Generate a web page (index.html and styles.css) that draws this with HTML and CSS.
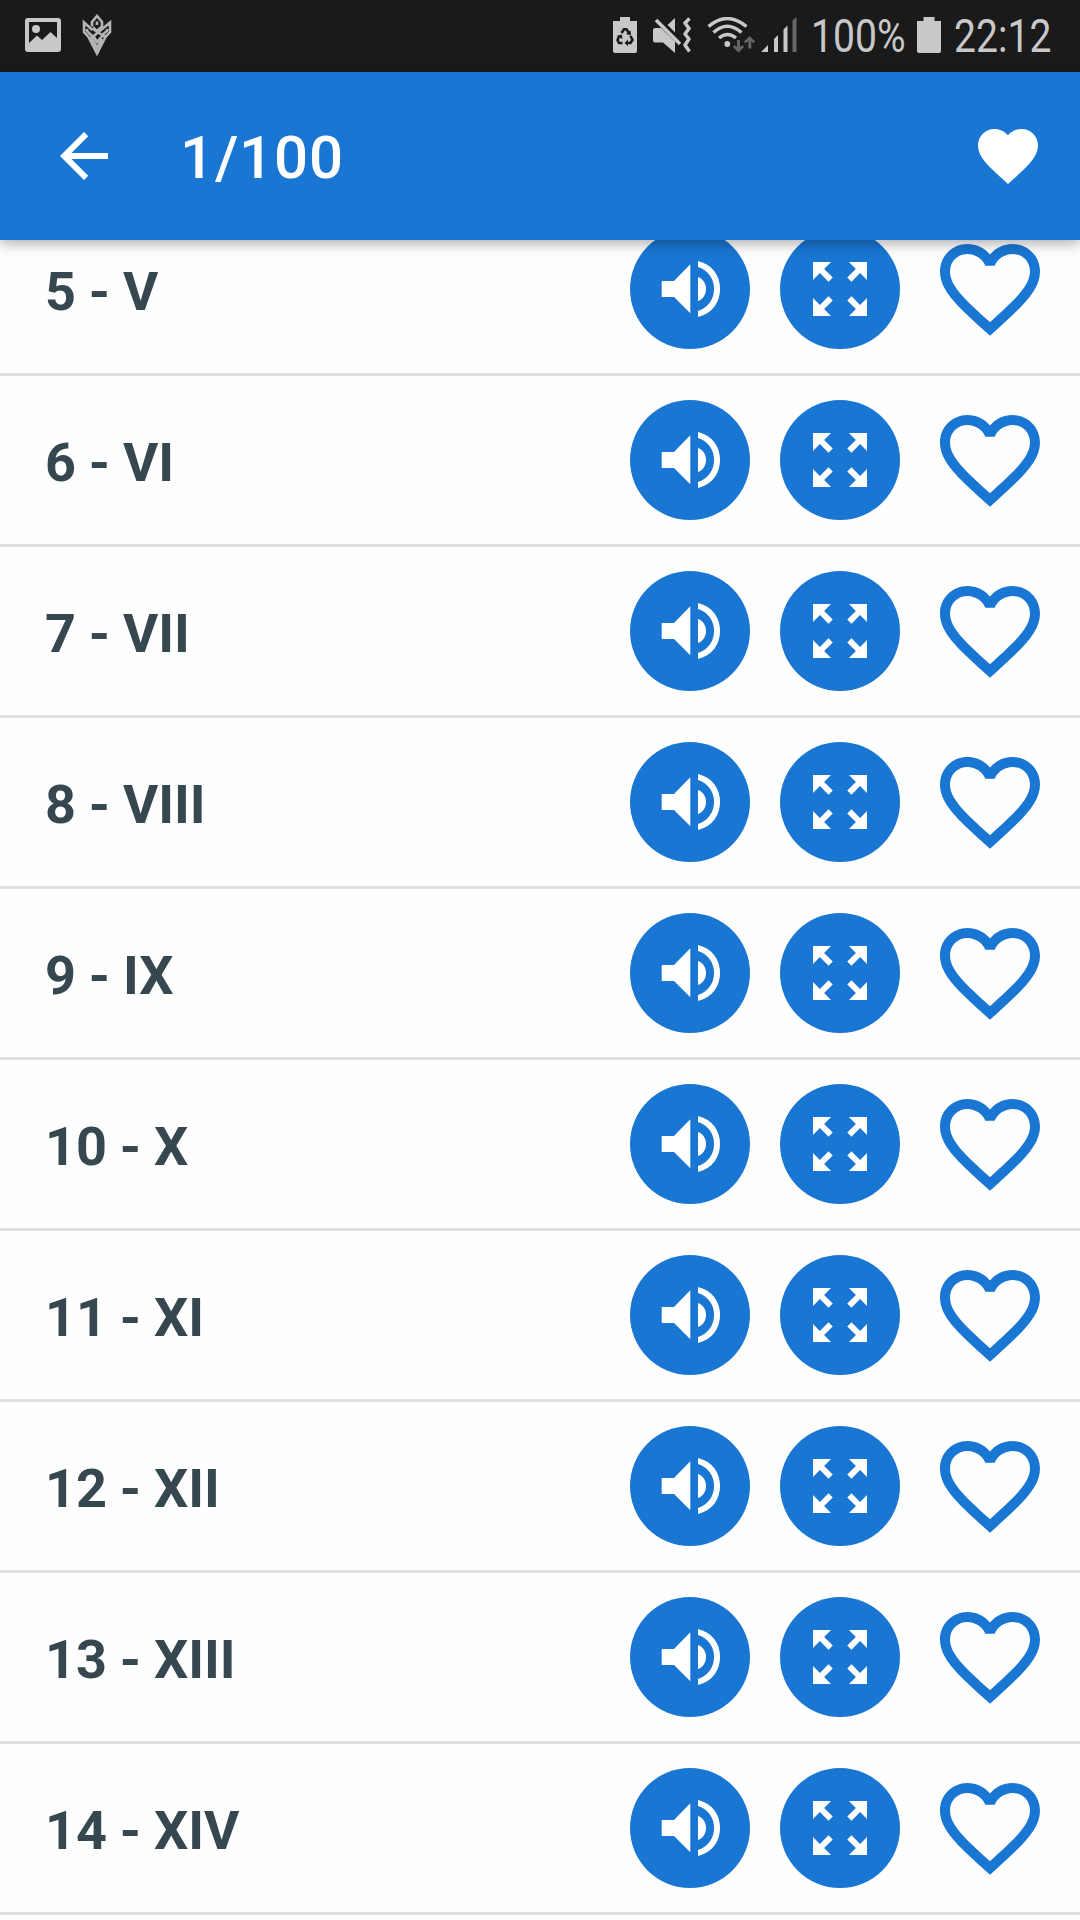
FILE: index.html
```html
<!DOCTYPE html>
<html lang="en">
<head>
<meta charset="UTF-8">
<meta name="viewport" content="width=device-width, initial-scale=1.0">
<title>Numbers</title>
<link rel="stylesheet" href="styles.css">
</head>
<body>
<!-- shared icons -->
<svg class="sprite">
  <symbol id="sound" viewBox="0 0 120 120">
    <path d="M31.7 52H44L60.3 35.3V84.3L44 68H31.7z"/>
    <path d="M68 48C78.7 51.500 78.700 68.500 68 72z"/>
    <path d="M68 32C97.500 38.500 97.500 81.500 68 88V82C89.500 75.500 89.500 44.500 68 38z"/>
  </symbol>
  <symbol id="expand" viewBox="0 0 24 24">
    <path d="M15 3l2.300 2.300-2.890 2.870 1.420 1.420L18.700 6.700 21 9V3zM3 9l2.300-2.300 2.870 2.890 1.420-1.420L6.700 5.300 9 3H3zm6 12l-2.300-2.300 2.890-2.870-1.420-1.420L5.300 17.300 3 15v6zm12-6l-2.300 2.300-2.870-2.890-1.420 1.420 2.890 2.870L15 21h6z"/>
  </symbol>
  <symbol id="heart" viewBox="0 0 24 24">
    <path d="M16.500 3c-1.740 0-3.410.81-4.500 2.090C10.910 3.810 9.240 3 7.500 3 4.420 3 2 5.420 2 8.500c0 3.780 3.400 6.860 8.550 11.540L12 21.350l1.450-1.320C18.600 15.360 22 12.280 22 8.500 22 5.420 19.580 3 16.500 3zm-4.400 15.550l-.1.1-.1-.1C7.140 14.240 4 11.390 4 8.500 4 6.500 5.500 5 7.500 5c1.540 0 3.040.99 3.570 2.360h1.870C13.460 5.990 14.960 5 16.500 5c2 0 3.500 1.500 3.500 3.500 0 2.890-3.140 5.740-7.900 10.050z"/>
  </symbol>
</svg>

<div class="statusbar">
  <svg class="picture" width="36" height="34" viewBox="0 0 36 34">
    <path fill-rule="evenodd" d="M3 0H33Q36 0 36 3V31Q36 34 33 34H3Q0 34 0 31V3Q0 0 3 0zM4 4V25L12 17.500L17 22L25.500 14L32 20V4z"/>
    <circle cx="11" cy="11" r="4"/>
  </svg>
  <svg class="knot" width="30" height="42" viewBox="0 0 30 42">
    <path d="M10 12.500V8L15 2L20 8V12.500L15 17L11 13.500M15 7.500V11"/>
    <path d="M10.500 16L2 8.500V18L6.500 23L15 39.500L23.500 23L28 18V8.500L19 16L8 25M5 15V17L10 22M25 15V17L19 22M11 15L23 23M10 25L15 34L20 25M12 23L15 28L22 20"/>
  </svg>
  <div class="status-right">
    <svg class="saver" width="24" height="36" viewBox="0 0 24 36">
      <path d="M7 0H17V4H24V34Q24 36 22 36H2Q0 36 0 34V4H7z"/>
      <path class="dark-line" d="M8.500 16L11 12.200H13.500L16 16M17.500 19L19.500 23L17.500 26H14M9.500 26H6L4.500 23L6.500 19"/>
      <path class="dark" d="M17.800 13.500V18.500L13 17zM15 22.500V29L11.500 26zM3.500 19L8.800 17.500L9.500 22z"/>
    </svg>
    <svg class="mute" width="38" height="36" viewBox="0 0 38 36">
      <path d="M2 11H8L22 24.500V36L10 25.500H2Q0 25.500 0 23.500V13Q0 11 2 11zM14.500 8L22 1V15.500z"/>
      <path class="line" d="M3 3L27 27" stroke-width="3.500"/>
      <path class="line" d="M36.500 1.500L32 6L36 11.500L32 17L36 22L32 28L36.500 34.500" stroke-width="3.500" stroke-linejoin="round"/>
    </svg>
    <svg class="wifi" width="48" height="36" viewBox="0 0 48 36">
      <path class="line" d="M1.500 9.500Q20 -6.500 39.500 9.500M6.500 15.500Q20 3 34.500 15.500M12 21Q20.500 14 29 21" stroke-width="3.400"/>
      <circle cx="20.300" cy="27" r="2.900"/>
      <path class="dim" d="M30 23H33V30L35.500 28L37 30L31.500 35.500L26 30L27.500 28L30 30zM41.300 31.500V24L38.500 26.500L37 24.500L42.800 19L48 24.500L46.500 26.500L44.300 24V31.500z"/>
    </svg>
    <svg class="signal" width="36" height="36" viewBox="0 0 36 36">
      <path d="M0 35L7 28V35zM13 35V22L17 18V35zM22.500 35V12.500L26.500 8.500V35z"/>
      <path class="dim" d="M31.500 35V3.500L35.500 0V35z"/>
    </svg>
    <span class="percent">100%</span>
    <svg class="battery" width="24" height="36" viewBox="0 0 24 36">
      <path d="M6.500 0H17.500V4H24V34Q24 36 22 36H2Q0 36 0 34V4H6.500z"/>
    </svg>
    <span class="clock">22:12</span>
  </div>
</div>

<div class="toolbar">
  <svg class="bar-icon" viewBox="0 0 24 24"><path d="M20 11H7.830l5.590-5.590L12 4l-8 8 8 8 1.410-1.410L7.830 13H20v-2z"/></svg>
  <h1>1/100</h1>
  <svg class="bar-icon" viewBox="0 0 24 24"><path d="M12 21.350l-1.450-1.320C5.400 15.360 2 12.280 2 8.500 2 5.420 4.420 3 7.500 3c1.740 0 3.410.81 4.500 2.090C13.090 3.810 14.760 3 16.500 3 19.580 3 22 5.420 22 8.500c0 3.780-3.400 6.860-8.550 11.540L12 21.350z"/></svg>
</div>

<div class="list">
  <div class="row">
    <span class="label">5 - V</span>
    <div class="circle"><svg class="sound"><use href="#sound"/></svg></div>
    <div class="circle"><svg class="expand"><use href="#expand"/></svg></div>
    <svg class="heart"><use href="#heart"/></svg>
  </div>
  <div class="row">
    <span class="label">6 - VI</span>
    <div class="circle"><svg class="sound"><use href="#sound"/></svg></div>
    <div class="circle"><svg class="expand"><use href="#expand"/></svg></div>
    <svg class="heart"><use href="#heart"/></svg>
  </div>
  <div class="row">
    <span class="label">7 - VII</span>
    <div class="circle"><svg class="sound"><use href="#sound"/></svg></div>
    <div class="circle"><svg class="expand"><use href="#expand"/></svg></div>
    <svg class="heart"><use href="#heart"/></svg>
  </div>
  <div class="row">
    <span class="label">8 - VIII</span>
    <div class="circle"><svg class="sound"><use href="#sound"/></svg></div>
    <div class="circle"><svg class="expand"><use href="#expand"/></svg></div>
    <svg class="heart"><use href="#heart"/></svg>
  </div>
  <div class="row">
    <span class="label">9 - IX</span>
    <div class="circle"><svg class="sound"><use href="#sound"/></svg></div>
    <div class="circle"><svg class="expand"><use href="#expand"/></svg></div>
    <svg class="heart"><use href="#heart"/></svg>
  </div>
  <div class="row">
    <span class="label">10 - X</span>
    <div class="circle"><svg class="sound"><use href="#sound"/></svg></div>
    <div class="circle"><svg class="expand"><use href="#expand"/></svg></div>
    <svg class="heart"><use href="#heart"/></svg>
  </div>
  <div class="row">
    <span class="label">11 - XI</span>
    <div class="circle"><svg class="sound"><use href="#sound"/></svg></div>
    <div class="circle"><svg class="expand"><use href="#expand"/></svg></div>
    <svg class="heart"><use href="#heart"/></svg>
  </div>
  <div class="row">
    <span class="label">12 - XII</span>
    <div class="circle"><svg class="sound"><use href="#sound"/></svg></div>
    <div class="circle"><svg class="expand"><use href="#expand"/></svg></div>
    <svg class="heart"><use href="#heart"/></svg>
  </div>
  <div class="row">
    <span class="label">13 - XIII</span>
    <div class="circle"><svg class="sound"><use href="#sound"/></svg></div>
    <div class="circle"><svg class="expand"><use href="#expand"/></svg></div>
    <svg class="heart"><use href="#heart"/></svg>
  </div>
  <div class="row">
    <span class="label">14 - XIV</span>
    <div class="circle"><svg class="sound"><use href="#sound"/></svg></div>
    <div class="circle"><svg class="expand"><use href="#expand"/></svg></div>
    <svg class="heart"><use href="#heart"/></svg>
  </div>
</div>
</body>
</html>
```
FILE: styles.css
```css
* {
  box-sizing: border-box;
}

body {
  margin: 0;
  height: 1920px;
  overflow: hidden;
  background-color: #fefefe;
  font-family: Roboto, sans-serif;
}

svg {
  display: block;
  flex-shrink: 0;
}

.sprite {
  display: none;
}

/* status bar */
.statusbar {
  display: flex;
  align-items: flex-start;
  height: 72px;
  padding: 0 24px 0 25px;
  background-color: #1a1a1a;
  color: #c8c8c8;
  fill: #c8c8c8;
}

.picture {
  margin-top: 18px;
}

.knot {
  margin: 14px 0 0 21px;
  fill: none;
  stroke: #b4b4b4;
  stroke-width: 2.6px;
}

.status-right {
  display: flex;
  margin-left: auto;
  padding-top: 17px;
}

.line {
  fill: none;
  stroke: #c8c8c8;
}

.dark {
  fill: #1a1a1a;
}

.dark-line {
  fill: none;
  stroke: #1a1a1a;
  stroke-width: 2.6px;
}

.dim {
  fill: #666;
}

.mute {
  margin-left: 16px;
}

.wifi {
  margin-left: 16px;
}

.signal {
  margin-left: 6px;
}

.percent,
.clock {
  font-size: 46px;
  line-height: 39px;
  transform: scaleX(0.85);
  transform-origin: left;
  white-space: nowrap;
}

.percent {
  width: 92px;
  margin-left: 14px;
}

.battery {
  margin-left: 14px;
}

.clock {
  width: 102px;
  margin-left: 13px;
}

/* toolbar */
.toolbar {
  position: relative;
  z-index: 1;
  display: flex;
  align-items: center;
  height: 168px;
  padding: 0 36px 0 48px;
  background-color: #1976d2;
  box-shadow: 0 4px 12px rgba(0, 0, 0, 0.3);
  color: #fff;
}

.toolbar h1 {
  flex: 1;
  margin: 0 0 0 60px;
  padding-top: 3px;
  font-size: 60px;
  font-weight: 500;
  letter-spacing: 0.8px;
}

.bar-icon {
  width: 72px;
  height: 72px;
  fill: #fff;
}

/* list, scrolled a bit under the toolbar */
.list {
  margin-top: -35px;
}

.row {
  display: flex;
  align-items: center;
  gap: 30px;
  height: 171px;
  padding: 0 30px 0 45px;
  border-bottom: 3px solid #e0e0e0;
}

.label {
  flex: 1;
  padding-top: 4px;
  color: #37474f;
  font-size: 54px;
  font-weight: bold;
  word-spacing: -0.6px;
}

.circle {
  display: flex;
  align-items: center;
  justify-content: center;
  width: 120px;
  height: 120px;
  border-radius: 50%;
  background-color: #1976d2;
  fill: #fff;
}

.sound {
  width: 120px;
  height: 120px;
}

.expand {
  width: 72px;
  height: 72px;
}

.heart {
  width: 120px;
  height: 120px;
  fill: #1976d2;
}
```
